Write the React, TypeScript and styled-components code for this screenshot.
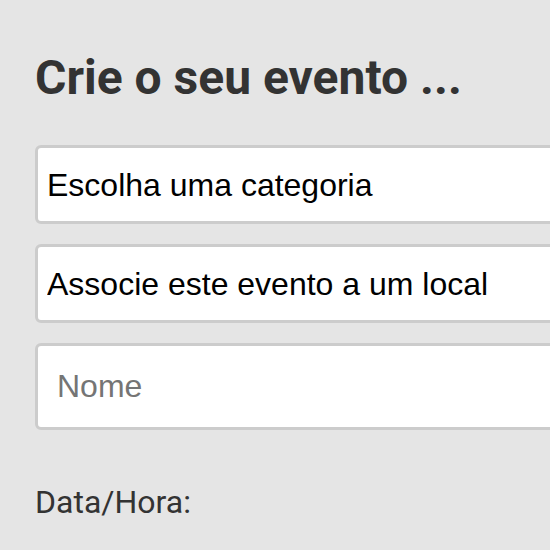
import styled, { createGlobalStyle } from 'styled-components';

const GlobalStyle = createGlobalStyle`
  html, body {
    margin: 0;
    padding: 0;
    background: #e5e5e5;
    overflow: hidden;
  }
  body {
    font-family: Roboto, "Liberation Sans", sans-serif;
    color: #333;
  }
`;

const Page = styled.main`
  padding: 49px 0 0 35px;
  width: 560px;
`;

const Title = styled.h1`
  margin: 0 0 39px;
  font-size: 48px;
  font-weight: 700;
  color: #333;
`;

const Form = styled.form`
  display: flex;
  flex-direction: column;
  gap: 20px;
`;

const Select = styled.select`
  appearance: none;
  box-sizing: border-box;
  width: 100%;
  height: 79px;
  padding: 0 9px;
  border: 3px solid #ccc;
  border-radius: 6px;
  background: #fff;
  color: #000;
  font-family: "Liberation Sans", Arial, sans-serif;
  font-size: 32px;
  outline: none;
`;

const TextInput = styled.input`
  box-sizing: border-box;
  width: 100%;
  height: 87px;
  padding: 0 19px;
  border: 3px solid #ccc;
  border-radius: 6px;
  background: #fff;
  color: #000;
  font-family: "Liberation Sans", Arial, sans-serif;
  font-size: 32px;
  outline: none;

  &::placeholder {
    color: #757575;
  }
`;

const Label = styled.label`
  display: block;
  margin-top: 53px;
  font-size: 32px;
  color: #333;
`;

export default function App() {
  return (
    <>
      <GlobalStyle />
      <Page>
        <Title>Crie o seu evento ...</Title>
        <Form>
          <Select defaultValue="">
            <option value="">Escolha uma categoria</option>
          </Select>
          <Select defaultValue="">
            <option value="">Associe este evento a um local</option>
          </Select>
          <TextInput placeholder="Nome" />
        </Form>
        <Label>Data/Hora:</Label>
      </Page>
    </>
  );
}
